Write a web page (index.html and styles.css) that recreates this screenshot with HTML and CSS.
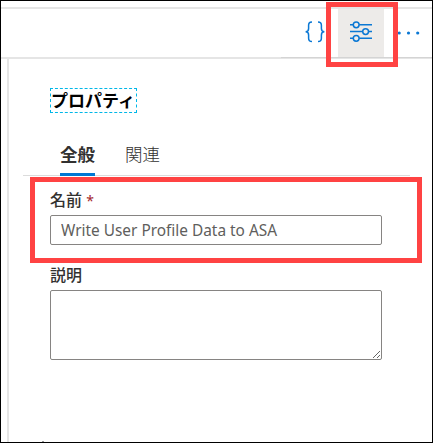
FILE: index.html
```html
<!DOCTYPE html>
<html lang="ja">
<head>
<meta charset="utf-8">
<title>プロパティ</title>
<link rel="stylesheet" href="styles.css">
</head>
<body>
<div class="window">
  <div class="toolbar">
    <div class="actions">
      <button class="tool code" aria-label="JSON">
        <svg width="20" height="22" viewBox="0 0 20 22"><path d="M7 1C4 1 3.6 2.3 3.6 4.2V7.5C3.6 9.8 2.6 10.8 .6 10.8C2.6 10.8 3.6 11.8 3.6 14V17.3C3.6 19.3 4 20.6 7 20.6M13 1C16 1 16.4 2.3 16.4 4.2V7.5C16.4 9.8 17.4 10.8 19.4 10.8C17.4 10.8 16.4 11.8 16.4 14V17.3C16.4 19.3 16 20.6 13 20.6"/></svg>
      </button>
      <button class="tool active" aria-label="プロパティ">
        <svg width="22" height="22" viewBox="0 0 22 22"><path d="M0 3.8H3.2M9.2 3.8H22M0 10.6H12.6M18.6 10.6H22M0 17.3H3.2M9.2 17.3H22"/><circle cx="6.2" cy="3.8" r="2.9"/><circle cx="15.6" cy="10.6" r="2.9"/><circle cx="6.2" cy="17.3" r="2.9"/></svg>
      </button>
      <button class="tool more" aria-label="その他">
        <svg width="24" height="4" viewBox="0 0 24 4"><circle cx="2.2" cy="2" r="1.6"/><circle cx="11.5" cy="2" r="1.6"/><circle cx="20.7" cy="2" r="1.6"/></svg>
      </button>
    </div>
  </div>
  <main class="panel">
    <h1 class="title">プロパティ</h1>
    <nav class="tabs">
      <span class="tab selected">全般</span>
      <span class="tab">関連</span>
    </nav>
    <div class="field">
      <label class="label" for="name">名前 <span class="required">*</span></label>
      <input class="input" id="name" value="Write User Profile Data to ASA">
    </div>
    <div class="field description">
      <label class="label" for="desc">説明</label>
      <textarea class="input area" id="desc"></textarea>
    </div>
  </main>
  <div class="callout callout-tool"></div>
  <div class="callout callout-name"></div>
  <div class="speck"></div>
</div>
</body>
</html>
```
FILE: styles.css
```css
* { box-sizing: border-box; }
body {
  margin: 0;
  background: #fff;
  font-family: "Noto Sans", "Noto Sans CJK JP", sans-serif;
  color: #323130;
}
.window {
  position: relative;
  display: flex;
  flex-direction: column;
  width: 433px;
  height: 443px;
  padding-top: 6px;
  border: 1px solid #000;
  overflow: hidden;
}
.toolbar {
  display: flex;
  justify-content: flex-end;
  height: 52px;
  border-top: 2px solid #e5e5e5;
  border-bottom: 2px solid #e5e5e5;
}
.actions {
  display: flex;
  width: 151px;
  height: 49px;
  border-bottom: 1px solid #d4d4d4;
}
.tool {
  display: flex;
  padding: 0;
  border: 0;
  background: none;
}
.tool svg { display: block; fill: none; stroke: #0b78d4; stroke-width: 1.5; }
.code { width: 57px; padding: 12px 0 0 24px; }
.active { width: 46px; padding: 12px 0 0 12px; background: #edebe9; }
.more { width: 48px; padding: 22px 0 0 13px; }
.more svg { fill: #0b78d4; stroke: none; }
.panel {
  flex: 1;
  margin-left: 6px;
  padding: 29px 50px 0 41px;
  border-left: 2px solid #e5e5e5;
}
.title {
  width: 87px;
  height: 25px;
  margin: 0;
  border: 1px dashed #00b7e8;
  color: #000;
  font-size: 17px;
  font-weight: 700;
  line-height: 24px;
  white-space: nowrap;
}
.tabs {
  display: flex;
  gap: 30px;
  width: 387px;
  height: 39px;
  margin: 24px 0 0 -27px;
  padding-left: 37px;
  border-bottom: 1px solid #dcdcdc;
}
.tab { height: 39px; font-size: 17.5px; font-weight: 300; line-height: 34px; }
.selected { border-bottom: 3px solid #0078d4; font-weight: 700; }
.field { margin-top: 12px; }
.description { margin-top: 18px; }
.label { display: block; height: 27px; font-size: 16px; font-weight: 500; line-height: 24px; }
.required { color: #a4262c; font-size: 14px; font-weight: 400; }
.input {
  display: block;
  width: 332px;
  height: 30px;
  padding: 0 10px;
  border: 1px solid #868482;
  border-radius: 2px;
  background: #fff;
  color: #605e5c;
  font: 15.4px "Noto Sans", sans-serif;
}
.area { height: 70px; resize: vertical; }
.callout { position: absolute; border: 5px solid #ff4343; }
.callout-tool { left: 325px; top: 1px; width: 72px; height: 65px; }
.callout-name { left: 29px; top: 176px; width: 392px; height: 86px; }
.speck { position: absolute; left: 41px; top: 440px; width: 2px; height: 1px; background: #999; }
```
